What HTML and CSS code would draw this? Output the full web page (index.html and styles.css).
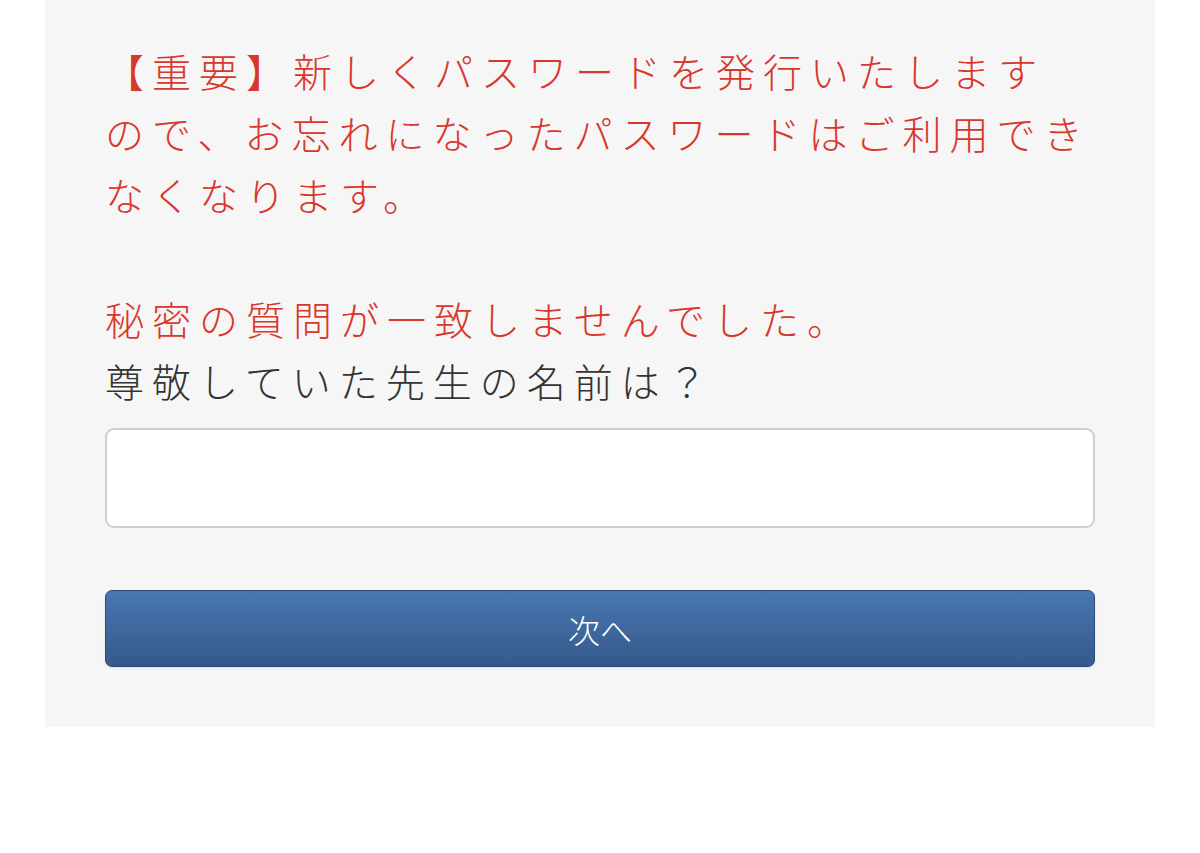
FILE: index.html
```html
<!DOCTYPE html>
<html lang="ja">
<head>
  <meta charset="UTF-8">
  <title>パスワード再発行</title>
  <link rel="stylesheet" href="styles.css">
</head>
<body>

<!-- Reset form panel -->
<div class="panel">
  <p class="notice">【重要】新しくパスワードを発行いたします<br>ので、お忘れになったパスワードはご利用でき<br>なくなります。</p>

  <p class="question">
    <span class="error">秘密の質問が一致しませんでした。</span><br>
    尊敬していた先生の名前は？
  </p>

  <input type="text" class="answer">

  <button class="next-btn">次へ</button>
</div>

</body>
</html>
```

FILE: styles.css
```css
* {
  box-sizing: border-box;
}

body {
  margin: 0;
  padding: 0;
  background-color: #ffffff;
  font-family: "Noto Sans CJK JP", "Noto Sans", sans-serif;
}

.panel {
  width: 1110px;
  margin-left: 45px;
  padding: 39px 60px 60px;
  background-color: #f6f6f6;
}

.notice,
.question {
  margin: 0;
  font-size: 39px;
  line-height: 62px;
  letter-spacing: 8px;
  font-weight: 300;
}

.notice {
  color: #d8372d;
  margin-bottom: 62px;
}

.question {
  color: #333333;
}

.error {
  color: #d8372d;
}

.answer {
  display: block;
  width: 100%;
  height: 100px;
  margin-top: 17px;
  border: 2px solid #cfcfcf;
  border-radius: 9px;
  background-color: #ffffff;
  font-size: 32px;
  padding: 0 16px;
}

.next-btn {
  display: block;
  width: 100%;
  height: 77px;
  margin-top: 62px;
  border: 1px solid #2c4d78;
  border-radius: 7px;
  background: linear-gradient(to bottom, #4877b1, #36598a);
  box-shadow: 0 1px 2px rgba(60, 90, 140, 0.15);
  color: #ffffff;
  font-family: "Noto Sans CJK JP", "Noto Sans", sans-serif;
  font-size: 32px;
  font-weight: 300;
  cursor: pointer;
}
```
